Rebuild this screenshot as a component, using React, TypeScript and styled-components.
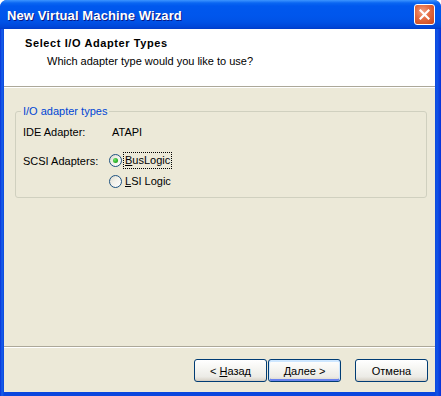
import React from 'react';
import styled, { createGlobalStyle } from 'styled-components';

const GlobalStyle = createGlobalStyle`
  html, body {
    margin: 0;
    padding: 0;
    background: #ffffff;
  }

  body {
    font-family: "Liberation Sans", Arial, sans-serif;
    font-size: 11px;
    color: #000000;
  }
`;

const Window = styled.div`
  width: 441px;
  height: 396px;
  display: flex;
  flex-direction: column;
  box-sizing: border-box;
  border-radius: 7px 7px 0 0;
  overflow: hidden;
  background: linear-gradient(90deg, #0831d9 0px, #1761ea 2px, #0a46de 4px, #0a46de 435px, #1155e6 437px, #0831d9 441px);
`;

const TitleBar = styled.div`
  flex: none;
  height: 29px;
  box-sizing: border-box;
  display: flex;
  align-items: center;
  justify-content: space-between;
  padding: 2px 6px 0 7px;
  background: linear-gradient(180deg, #3d95ff 0px, #0a66f2 3px, #0058ee 6px, #0056ec 16px, #0052e6 22px, #0046d8 27px, #003cc8 29px);
`;

const TitleText = styled.span`
  font-family: "Liberation Sans", Arial, sans-serif;
  font-weight: bold;
  font-size: 13px;
  color: #ffffff;
  text-shadow: 1px 1px 0 #0a1883;
  letter-spacing: 0.1px;
`;

const CloseButton = styled.button`
  width: 21px;
  height: 21px;
  margin-top: -2px;
  padding: 0;
  display: flex;
  align-items: center;
  justify-content: center;
  box-sizing: border-box;
  border: 1px solid #ffffff;
  border-radius: 3px;
  background: radial-gradient(circle at 40% 35%, #f2a184 0%, #e2693f 45%, #c8441a 100%);
`;

const Frame = styled.div`
  flex: 1;
  min-height: 0;
  display: flex;
  flex-direction: column;
  margin: 0 6px 4px 4px;
  background: #ece9d8;
`;

const Header = styled.div`
  flex: none;
  height: 57px;
  box-sizing: border-box;
  padding: 8px 21px 0;
  background: #ffffff;
`;

const HeaderTitle = styled.div`
  font-weight: bold;
  line-height: 13px;
  letter-spacing: 0.6px;
`;

const HeaderSubtitle = styled.div`
  margin-top: 5px;
  padding-left: 22px;
  line-height: 13px;
`;

const Separator = styled.div`
  flex: none;
  height: 0;
  border-top: 1px solid #aca899;
  border-bottom: 1px solid #ffffff;
`;

const Body = styled.div`
  flex: 1;
  padding: 17px 8px 0 11px;
`;

const GroupBox = styled.fieldset`
  margin: 0;
  padding: 6px 7px 8px;
  border: 1px solid #d0d0bf;
  border-radius: 3px;
  min-inline-size: 0;
`;

const GroupLegend = styled.legend`
  margin-left: -2px;
  padding: 0 2px;
  line-height: 13px;
  color: #0046d5;
`;

const FieldRow = styled.div<{ $gap: number }>`
  display: grid;
  grid-template-columns: 86px auto;
  align-items: center;
  height: 16px;
  margin-top: ${p => p.$gap}px;
`;

const FieldValue = styled.span`
  padding-left: 3px;
`;

const RadioOption = styled.label`
  display: flex;
  align-items: center;
  gap: 1px;
`;

const RadioCircle = styled.span<{ $checked?: boolean }>`
  position: relative;
  width: 13px;
  height: 13px;
  box-sizing: border-box;
  border: 1px solid #1c5180;
  border-radius: 50%;
  background: linear-gradient(135deg, #dcd9cc 0%, #f2f1ea 45%, #ffffff 100%);

  &::after {
    content: "";
    display: ${p => (p.$checked ? 'block' : 'none')};
    position: absolute;
    left: 3px;
    top: 3px;
    width: 5px;
    height: 5px;
    border-radius: 50%;
    background: radial-gradient(circle at 35% 35%, #6ee66a 0%, #31b42e 55%, #1a8a18 100%);
  }
`;

const RadioText = styled.span<{ $focused?: boolean }>`
  padding: 1px 1px;
  border: 1px ${p => (p.$focused ? 'dotted #000000' : 'solid transparent')};
  line-height: 13px;
`;

const Footer = styled.div`
  flex: none;
  height: 44px;
  box-sizing: border-box;
  display: flex;
  justify-content: flex-end;
  align-items: flex-start;
  padding: 11px 7px 0 0;
`;

const WizardButton = styled.button<{ $default?: boolean; $gap: number }>`
  width: 73px;
  height: 23px;
  margin-left: ${p => p.$gap}px;
  padding: 0;
  box-sizing: border-box;
  border: 1px solid #003c74;
  border-radius: 3px;
  font-family: "Liberation Sans", Arial, sans-serif;
  font-size: 11px;
  color: #000000;
  background: linear-gradient(180deg, #ffffff 0%, #f7f7f4 35%, #ecebe6 80%, #d6d0c5 100%);
  box-shadow: ${p => (p.$default
    ? 'inset 0 1px 0 1px #cee7ff, inset 0 -1px 0 1px #6982ee'
    : 'inset 0 -1px 0 0 #d6d0c5')};
`;

const CloseIcon = () => (
  <svg width="11" height="11" viewBox="0 0 11 11">
    <path d="M1.5 1.5 L9.5 9.5 M9.5 1.5 L1.5 9.5" stroke="#ffffff" strokeWidth="2.2" strokeLinecap="square" />
  </svg>
);

export default function App() {
  return (
    <>
      <GlobalStyle />
      <Window>
        <TitleBar>
          <TitleText>New Virtual Machine Wizard</TitleText>
          <CloseButton aria-label="Close">
            <CloseIcon />
          </CloseButton>
        </TitleBar>
        <Frame>
          <Header>
            <HeaderTitle>Select I/O Adapter Types</HeaderTitle>
            <HeaderSubtitle>Which adapter type would you like to use?</HeaderSubtitle>
          </Header>
          <Separator />
          <Body>
            <GroupBox>
              <GroupLegend>I/O adapter types</GroupLegend>
              <FieldRow $gap={0}>
                <span>IDE Adapter:</span>
                <FieldValue>ATAPI</FieldValue>
              </FieldRow>
              <FieldRow $gap={12}>
                <span>SCSI Adapters:</span>
                <RadioOption>
                  <RadioCircle $checked />
                  <RadioText $focused><u>B</u>usLogic</RadioText>
                </RadioOption>
              </FieldRow>
              <FieldRow $gap={5}>
                <span />
                <RadioOption>
                  <RadioCircle />
                  <RadioText><u>L</u>SI Logic</RadioText>
                </RadioOption>
              </FieldRow>
            </GroupBox>
          </Body>
          <Separator />
          <Footer>
            <WizardButton $gap={0}>&lt; <u>Н</u>азад</WizardButton>
            <WizardButton $gap={1} $default><u>Д</u>алее &gt;</WizardButton>
            <WizardButton $gap={14}>Отмена</WizardButton>
          </Footer>
        </Frame>
      </Window>
    </>
  );
}
